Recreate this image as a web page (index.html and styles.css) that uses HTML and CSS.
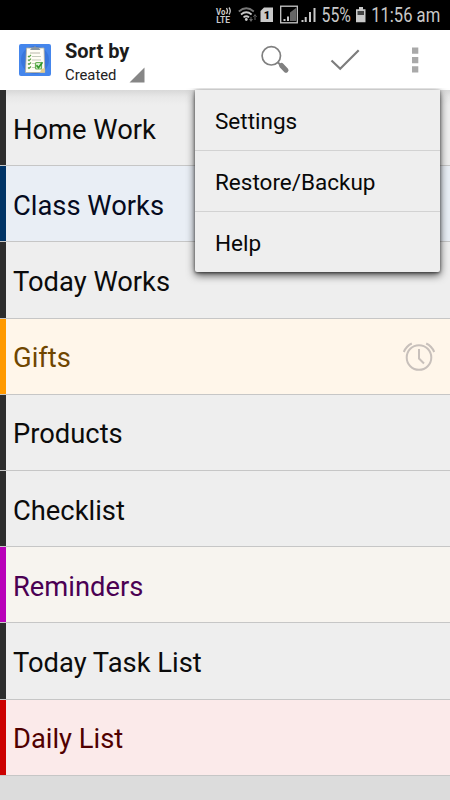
FILE: index.html
```
<!DOCTYPE html>
<html lang="en">
<head>
<meta charset="utf-8">
<title>Checklists</title>
<link rel="stylesheet" href="styles.css">
</head>
<body>
<div class="screen">
  <div class="status">
    <svg width="450" height="30" viewBox="0 0 450 30">
      <g class="status-ink">
        <text class="tiny" transform="translate(216 14.500) scale(.9 1)">Vo</text>
        <path class="line" d="M226.500 8q2 3 0 6M229 7.500q2.500 3.500 0 7"/>
        <text class="tiny" transform="translate(216.300 22.700) scale(.96 1)">LTE</text>
        <path class="wave dim" d="M238.800 11.500q7.500-6.500 15 0"/>
        <path class="wave" d="M241 14.500q5.300-4.500 10.600 0M243.500 17.400q2.800-2.300 5.600 0"/>
        <circle cx="246.300" cy="19.500" r="1.400"/>
        <path class="faint" d="M249 19h4l-2 3zM253 17h4l-2-3zM250.500 17h1v3h-1zM254.500 16h1v4h-1z"/>
        <path d="M264 7.500h9v14.500h-12.500v-11z"/>
        <text class="sim" x="263.700" y="19">1</text>
        <rect class="box" x="280.700" y="6.200" width="16.600" height="16.600"/>
        <path d="M283.500 19h2v2h-2zM287 16.500h2v4.500h-2z"/>
        <path class="mid" d="M290 12.500l6-4.500v13h-6z"/>
        <path d="M301.500 20h2v2h-2zM304.700 17h2v5h-2zM309 12h2v10h-2zM313.500 8h2v14h-2z"/>
        <text class="big" transform="translate(321.500 22.400) scale(.79 1)">55%</text>
        <path d="M359 7h4v2.300h2.500v13h-9.500v-13h3z"/>
        <path class="dark" d="M357.500 11h6.500v4h-6.500z"/>
        <text class="big" transform="translate(371.200 22.400) scale(.83 1)">11:56 am</text>
      </g>
    </svg>
  </div>
  <header class="bar">
    <svg class="logo" width="34" height="34" viewBox="0 0 34 34">
      <rect x="1" y="1" width="32" height="32" rx="2" fill="#4586ec"/>
      <circle cx="17" cy="17" r="14" fill="#3976dc"/>
      <path d="M8.500 5h17.500l.8 24.500h-19.300z" fill="#fffdf5" stroke="#b5b09d" stroke-width=".8"/>
      <path d="M12 7l2-2.500h1.500q1.500-2.500 3 0h2l2 2.500z" fill="#8996a1"/>
      <path d="M12 10h10" stroke="#b8b8aa" stroke-width="1"/>
      <path d="M14 13.500h9M14 17h9M14 20.500h4M14 24.500h3" stroke="#c4cabb" stroke-width="1"/>
      <path d="M10 13l1 1 2-2M10 16.700l1 1 2-2M10 20.500l1 1 2-2M10 24.500l1 1 2-2" fill="none" stroke="#58a043" stroke-width="1.200"/>
      <path d="M22 29.500l1.500-3.500 3.200-1v4.500z" fill="#e6cd8b"/>
      <rect x="17.500" y="19.500" width="6" height="6.500" rx="1" fill="#d8eed0" stroke="#69b157" stroke-width="1.200"/>
      <path d="M18.500 22.200l2 2.500 4-5.500" fill="none" stroke="#2f9728" stroke-width="1.700"/>
    </svg>
    <div class="sort"><div class="sort-title">Sort by</div><div class="sort-value">Created</div></div>
    <svg class="actions" width="307" height="60" viewBox="143 30 307 60">
      <path d="M144.500 67.500v15h-15z" fill="#868686"/>
      <circle cx="271.300" cy="55.800" r="9.200" fill="none" stroke="#808080" stroke-width="1.700"/>
      <path d="M277.500 62l3 3" stroke="#808080" stroke-width="2"/>
      <path d="M281.500 65.500l4.500 4.700" stroke="#808080" stroke-width="5" stroke-linecap="round"/>
      <path d="M331.500 60.500l8.700 8.300 18.500-18.600" fill="none" stroke="#7d7d7d" stroke-width="2.200"/>
      <path d="M412 47.500h6.300v6.300h-6.300zM412 57h6.300v6.300h-6.300zM412 66.300h6.300v6.300h-6.300z" fill="#a9a9a9"/>
    </svg>
  </header>
  <main class="list">
    <div class="row">Home Work</div>
    <div class="row blue">Class Works</div>
    <div class="row">Today Works</div>
    <div class="row orange">Gifts
      <svg class="alarm" width="34" height="32" viewBox="0 0 34 32">
        <circle cx="17" cy="16.500" r="12.300"/>
        <path d="M17 8v9.500l5 5M1.800 11q2.500-6 8-8.500M32.200 11q-2.500-6-8-8.500"/>
      </svg>
    </div>
    <div class="row">Products</div>
    <div class="row">Checklist</div>
    <div class="row purple">Reminders</div>
    <div class="row">Today Task List</div>
    <div class="row red">Daily List</div>
  </main>
  <nav class="menu">
    <div class="item">Settings</div>
    <div class="item">Restore/Backup</div>
    <div class="item">Help</div>
  </nav>
</div>
</body>
</html>
```
FILE: styles.css
```
* { box-sizing: border-box; }
body { margin: 0; font-family: Roboto, "Liberation Sans", sans-serif; }
.screen {
  position: relative;
  width: 450px;
  height: 800px;
  overflow: hidden;
  background: #dcdcdc;
}
.status { height: 30px; background: #000; }
.status svg { display: block; }
.status-ink { fill: #c9c9c9; }
.tiny { font-size: 8.8px; font-weight: 700; }
.big { font-size: 20px; }
.sim { font-size: 11px; font-weight: 900; fill: #000; }
.line, .wave, .box { fill: none; stroke: #c9c9c9; stroke-width: 1.3; }
.wave { stroke-width: 1.7; }
.dim { stroke: #777; }
.faint, .mid { fill: #666; }
.dark { fill: #444; }
.bar {
  display: flex;
  height: 60px;
  background: #fff;
}
.logo { flex: none; margin: 13px 0 0 18px; }
.sort { width: 91px; flex: none; padding: 9px 0 0 13px; white-space: nowrap; }
.sort-title { font-size: 20px; line-height: 24px; font-weight: 700; color: #1c1c1c; }
.sort-value { font-size: 14.8px; line-height: 24px; color: #222; }
.actions { flex: none; overflow: visible; }
.row {
  --mark: #2d2d2d;
  display: flex;
  align-items: center;
  justify-content: space-between;
  height: 76.2px;
  padding: 4px 14px 0 13px;
  border-bottom: 1.3px solid #c6c6c6;
  background: linear-gradient(var(--mark), var(--mark)) 0 0 / 6px 100% no-repeat #eee;
  color: #0b0b0b;
  font-size: 27.35px;
}
.row:first-child {
  background:
    linear-gradient(var(--mark), var(--mark)) 0 0 / 6px 100% no-repeat,
    linear-gradient(#d8d8d8, #e8e8e8 7px, #eee 15px);
}
.blue { --mark: #003366; background-color: #e9eef5; color: #050a20; }
.orange { --mark: #ff9900; background-color: #fff6ea; color: #704600; }
.purple { --mark: #b900b9; background-color: #f7f4ef; color: #4b0053; }
.red { --mark: #cc0000; background-color: #fbeaea; color: #500000; }
.alarm { margin-top: -3px; fill: none; stroke: #c8c0bb; stroke-width: 2; }
.menu {
  position: absolute;
  left: 195px;
  top: 90px;
  width: 245px;
  height: 181.5px;
  background: #eee;
  border-radius: 0 0 2px 2px;
  box-shadow: 0 3px 8px rgba(0, 0, 0, .7), 0 1px 3px rgba(0, 0, 0, .5);
  clip-path: inset(-2px -12px -16px -12px);
}
.item {
  display: flex;
  align-items: center;
  height: 61px;
  padding: 1px 20px 0;
  border-bottom: 1px solid #d2d2d2;
  color: #080808;
  font-size: 22.5px;
}
.item:last-child { height: 60px; border-bottom: 0; }
```
